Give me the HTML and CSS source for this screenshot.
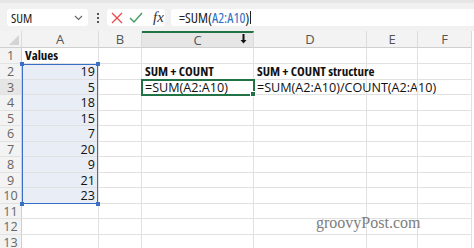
FILE: index.html
```html
<!DOCTYPE html>
<html lang="en">
<head>
<meta charset="UTF-8">
<meta name="viewport" content="width=device-width, initial-scale=1.0">
<title>SUM + COUNT</title>
<link rel="stylesheet" href="styles.css">
</head>
<body>

<div class="app">
    <div class="toolbar">
        <div class="namebox">
            <span>SUM</span>
            <svg class="chev" width="9" height="6" viewBox="0 0 9 6"><path d="M1 1 L4.5 4.5 L8 1" fill="none" stroke="#666" stroke-width="1.1"/></svg>
        </div>
        <div class="dots"><i></i><i></i><i></i></div>
        <div class="fbtns">
            <svg width="12" height="12" viewBox="0 0 12 12"><path d="M1 1 L11 11 M11 1 L1 11" stroke="#e5484d" stroke-width="1.3"/></svg>
            <svg width="14" height="12" viewBox="0 0 14 12"><path d="M1 6 L5 10 L13 1" fill="none" stroke="#3f9b5a" stroke-width="1.3"/></svg>
            <span class="fx">fx</span>
        </div>
        <div class="finput">=SUM(<span class="ref">A2:A10</span>)<span class="caret"></span></div>
    </div>

    <div class="sheet">
        <div class="hd corner"><svg width="10" height="10" viewBox="0 0 10 10"><path d="M10 0 L10 10 L0 10 Z" fill="#d4d4d4"/></svg></div>
        <div class="hd">A</div>
        <div class="hd">B</div>
        <div class="hd hd-sel">C</div>
        <div class="hd">D</div>
        <div class="hd">E</div>
        <div class="hd">F</div>

        <div class="rn">1</div><div class="c b">Values</div><div class="c"></div><div class="c"></div><div class="c"></div><div class="c"></div><div class="c"></div>
        <div class="rn">2</div><div class="c n sel">19</div><div class="c"></div><div class="c b">SUM + COUNT</div><div class="c b ov">SUM + COUNT structure</div><div class="c"></div><div class="c"></div>
        <div class="rn rn-sel">3</div><div class="c n sel">5</div><div class="c"></div><div class="c active">=SUM(A2:A10)</div><div class="c ov">=SUM(A2:A10)/COUNT(A2:A10)</div><div class="c"></div><div class="c"></div>
        <div class="rn">4</div><div class="c n sel">18</div><div class="c"></div><div class="c"></div><div class="c"></div><div class="c"></div><div class="c"></div>
        <div class="rn">5</div><div class="c n sel">15</div><div class="c"></div><div class="c"></div><div class="c"></div><div class="c"></div><div class="c"></div>
        <div class="rn">6</div><div class="c n sel">7</div><div class="c"></div><div class="c"></div><div class="c"></div><div class="c"></div><div class="c"></div>
        <div class="rn">7</div><div class="c n sel">20</div><div class="c"></div><div class="c"></div><div class="c"></div><div class="c"></div><div class="c"></div>
        <div class="rn">8</div><div class="c n sel">9</div><div class="c"></div><div class="c"></div><div class="c"></div><div class="c"></div><div class="c"></div>
        <div class="rn">9</div><div class="c n sel">21</div><div class="c"></div><div class="c"></div><div class="c"></div><div class="c"></div><div class="c"></div>
        <div class="rn">10</div><div class="c n sel">23</div><div class="c"></div><div class="c"></div><div class="c"></div><div class="c"></div><div class="c"></div>
        <div class="rn">11</div><div class="c"></div><div class="c"></div><div class="c"></div><div class="c"></div><div class="c"></div><div class="c"></div>
        <div class="rn">12</div><div class="c"></div><div class="c"></div><div class="c"></div><div class="c"></div><div class="c"></div><div class="c"></div>
        <div class="rn">13</div><div class="c"></div><div class="c"></div><div class="c"></div><div class="c"></div><div class="c"></div><div class="c"></div>

        <div class="range"><i class="h1"></i><i class="h2"></i><i class="h3"></i><i class="h4"></i></div>
        <svg class="cursor" width="7" height="10" viewBox="0 0 7 10"><path d="M2.5 0 H4.5 V6 H6.5 L3.5 9.5 L0.5 6 H2.5 Z" fill="#111"/></svg>
        <div class="mark">groovyPost.com</div>
    </div>
</div>

</body>
</html>
```

FILE: styles.css
```css
body {
    margin: 0;
    padding: 0;
    background-color: #fff;
    font-family: "Open Sans", Lato, sans-serif;
    font-stretch: 88%;
    overflow: hidden;
}
.app {
    width: 474px;
    height: 248px;
    overflow: hidden;
}
.toolbar {
    height: 31px;
    box-sizing: border-box;
    background-color: #f1f1f1;
    border-top: 3px solid #e6e6e6;
    padding: 6px 0 5px 7px;
    display: flex;
    align-items: stretch;
    font-stretch: 75%;
}
.namebox {
    width: 81px;
    background-color: #fff;
    border-radius: 3px;
    display: flex;
    align-items: center;
    justify-content: space-between;
    padding: 0 5px 0 4px;
    box-sizing: border-box;
    font-size: 13px;
    color: #222;
}
.chev {
    margin-top: 1px;
}
.dots {
    width: 19px;
    display: flex;
    flex-direction: column;
    align-items: center;
    justify-content: center;
    gap: 2px;
}
.dots i {
    width: 2px;
    height: 2px;
    background-color: #555;
    display: block;
}
.fbtns {
    width: 58px;
    background-color: #fff;
    border-radius: 3px;
    display: flex;
    align-items: center;
    padding-left: 4px;
    gap: 6px;
    box-sizing: border-box;
}
.fx {
    font-family: "Liberation Serif", serif;
    font-style: italic;
    font-size: 15px;
    color: #333;
    margin-left: 4px;
}
.finput {
    flex: 1;
    margin-left: 6px;
    background-color: #fff;
    border-radius: 3px 0 0 3px;
    font-size: 14px;
    line-height: 17px;
    padding-left: 8px;
    color: #222;
    display: flex;
    align-items: center;
}
.ref {
    color: #2f6fc4;
}
.caret {
    width: 1px;
    height: 13px;
    background-color: #222;
    margin-left: 1px;
}
.sheet {
    position: relative;
    display: grid;
    grid-template-columns: 22px 77px 43px 112px 113px 51px 54px;
    grid-template-rows: 17px 16px;
    grid-auto-rows: 15.56px;
    font-size: 13px;
    color: #111;
}
.hd {
    background-color: #f3f3f3;
    color: #555;
    text-align: center;
    font-size: 13px;
    line-height: 16px;
    border-right: 1px solid #dcdcdc;
    border-bottom: 1px solid #cfcfcf;
}
.corner {
    display: flex;
    align-items: flex-end;
    justify-content: flex-end;
    padding: 0 2px 2px 0;
}
.hd-sel {
    background-color: #e6e6e6;
    border-top: 2px solid #217346;
    border-bottom: 1px solid #cfcfcf;
    line-height: 14px;
}
.rn {
    background-color: #f3f3f3;
    color: #666;
    text-align: center;
    font-size: 12.6px;
    line-height: 15px;
    border-right: 1px solid #cfcfcf;
    border-bottom: 1px solid #e2e2e2;
}
.rn-sel {
    background-color: #e6e6e6;
}
.c {
    border-right: 1px solid #e1e1e1;
    border-bottom: 1px solid #e1e1e1;
    padding: 0 3px;
    line-height: 15px;
    white-space: nowrap;
    font-size: 12.6px;
}
.b {
    font-weight: bold;
    font-stretch: 75%;
    font-size: 13px;
}
.n {
    text-align: right;
}
.sel {
    background-color: #e9edf6;
}
.ov {
    overflow: visible;
}
.active {
    outline: 2px solid #217346;
    outline-offset: -1px;
    position: relative;
    z-index: 1;
}
.active::after {
    content: "";
    position: absolute;
    right: -3px;
    bottom: -3px;
    width: 4px;
    height: 4px;
    background-color: #217346;
    border: 1px solid #fff;
}
.range {
    position: absolute;
    left: 22px;
    top: 33px;
    width: 76px;
    height: 140px;
    border: 1.5px solid #3a6fc6;
    box-sizing: border-box;
}
.range i {
    position: absolute;
    width: 4px;
    height: 4px;
    background-color: #3a6fc6;
}
.range .h1 { left: -3px; top: -3px; }
.range .h2 { right: -3px; top: -3px; }
.range .h3 { left: -3px; bottom: -3px; }
.range .h4 { right: -3px; bottom: -3px; }
.cursor {
    position: absolute;
    left: 240px;
    top: 3px;
}
.mark {
    position: absolute;
    left: 316px;
    top: 183px;
    font-family: "Liberation Serif", serif;
    font-size: 16px;
    color: #7d7d7d;
    font-stretch: normal;
}
```
